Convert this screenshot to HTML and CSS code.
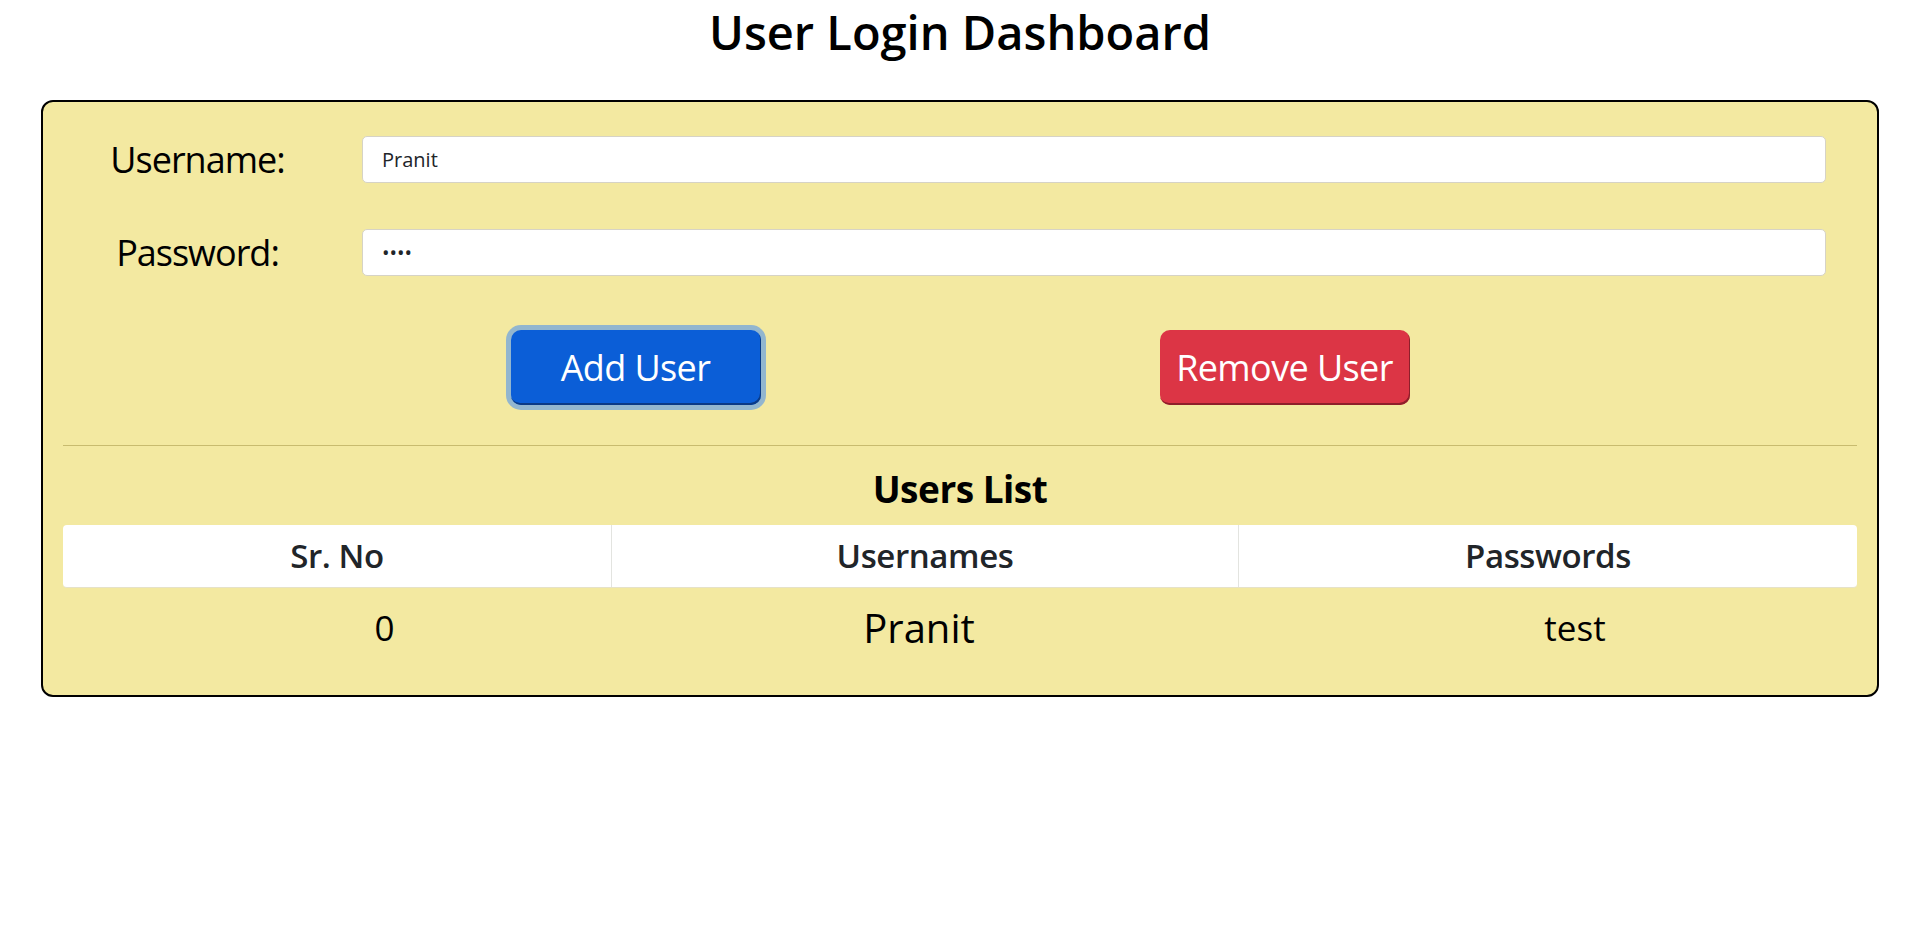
FILE: index.html
```html
<!DOCTYPE html>
<html lang="en">
<head>
<meta charset="utf-8">
<title>User Login Dashboard</title>
<link rel="stylesheet" href="styles.css">
</head>
<body>
<h1 class="title">User Login Dashboard</h1>
<div class="card">
  <div class="form-row">
    <label class="form-label" for="username">Username:</label>
    <input id="username" class="form-input" type="text" value="Pranit">
  </div>
  <div class="form-row">
    <label class="form-label" for="password">Password:</label>
    <input id="password" class="form-input" type="password" value="test">
  </div>
  <div class="actions">
    <button class="btn btn-add" type="button">Add User</button>
    <button class="btn btn-remove" type="button">Remove User</button>
  </div>
  <hr class="divider">
  <h2 class="list-title">Users List</h2>
  <div class="users-table">
    <div class="thead">
      <div class="th">Sr. No</div>
      <div class="th">Usernames</div>
      <div class="th">Passwords</div>
    </div>
    <div class="trow">
      <div class="td">0</div>
      <div class="td td-name">Pranit</div>
      <div class="td">test</div>
    </div>
  </div>
</div>
</body>
</html>
```
FILE: styles.css
```css
* {
  box-sizing: border-box;
}

body {
  margin: 0;
  background: #ffffff;
  color: #000000;
  font-family: "Open Sans", "Noto Sans", sans-serif;
}

.title {
  margin: 0 0 36px;
  font-size: 47px;
  line-height: 64px;
  font-weight: 600;
  text-align: center;
}

.card {
  margin: 0 41px;
  padding: 20px;
  border: 2px solid #000000;
  border-radius: 12px;
  background: #f3e9a1;
}

.form-row {
  display: grid;
  grid-template-columns: 269px 1fr;
  column-gap: 30px;
  align-items: center;
  height: 47px;
  margin-top: 14px;
  padding-right: 31px;
}

.form-row + .form-row {
  margin-top: 46px;
}

.form-label {
  font-size: 36px;
  line-height: 47px;
  letter-spacing: -1px;
  text-align: center;
}

.form-input {
  width: 100%;
  height: 47px;
  padding: 0 19px;
  border: 1px solid #d6d3c6;
  border-radius: 5px;
  background: #ffffff;
  color: #212529;
  font-family: "Open Sans", "Noto Sans", sans-serif;
  font-size: 20px;
  outline: none;
}

.actions {
  display: flex;
  justify-content: center;
  gap: 399px;
  margin-top: 54px;
}

.btn {
  width: 250px;
  height: 75px;
  padding: 0;
  border: none;
  border-radius: 10px;
  color: #ffffff;
  font-family: "Open Sans", "Noto Sans", sans-serif;
  font-size: 36px;
  letter-spacing: -0.6px;
  cursor: pointer;
}

.btn-add {
  background: #0b5ed7;
  box-shadow: inset -1px -2px 0 #0a3a86, 0 0 0 5px rgba(49, 132, 253, 0.5);
}

.btn-remove {
  background: #dc3545;
  box-shadow: inset -1px -2px 0 #8e1f2a;
}

.divider {
  margin: 40px 0 0;
  border: 0;
  border-top: 1px solid #c8bb6f;
}

.list-title {
  margin: 19px 0 0;
  font-size: 37px;
  line-height: 48px;
  font-weight: 700;
  letter-spacing: -0.5px;
  text-align: center;
}

.users-table {
  margin-top: 12px;
}

.thead {
  display: grid;
  grid-template-columns: 548px 627px 1fr;
  height: 63px;
  background: #ffffff;
  border-radius: 4px;
  border-bottom: 1px solid #e6e2c8;
}

.th {
  color: #212529;
  font-size: 33px;
  font-weight: 600;
  letter-spacing: -0.4px;
  line-height: 62px;
  text-align: center;
}

.th + .th {
  border-left: 1px solid #e3e4e0;
}

.trow {
  display: grid;
  grid-template-columns: 321px 748px 1fr;
  align-items: center;
  height: 78px;
  margin-bottom: 9px;
  padding-left: 161px;
}

.td {
  font-size: 35px;
  text-align: center;
}

.td-name {
  font-size: 40px;
}
```
